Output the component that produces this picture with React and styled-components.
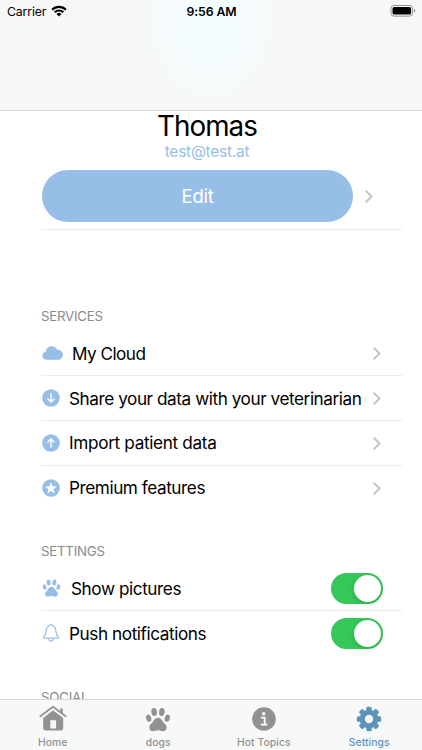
import React from "react";
import styled, { createGlobalStyle } from "styled-components";

const BLUE = "#97bee7";

export default function App() {
  return (
    <Screen>
      <GlobalStyle />
      <Header>
        <StatusBar>
          <Carrier>
            Carrier
            <WifiIcon />
          </Carrier>
          <Clock>9:56 AM</Clock>
          <Battery>
            <BatteryIcon />
          </Battery>
        </StatusBar>
      </Header>

      <Content>
        <Name>Thomas</Name>
        <Email>test@test.at</Email>
        <EditRow>
          <EditButton>Edit</EditButton>
          <Chevron />
        </EditRow>

        <Section $gap={77}>
          <SectionTitle>SERVICES</SectionTitle>
          <Row>
            <CloudIcon />
            <Label $left={8} $track={-0.55}>My Cloud</Label>
            <Chevron />
          </Row>
          <Row>
            <ArrowIcon />
            <Label $track={-0.45}>Share your data with your veterinarian</Label>
            <Chevron />
          </Row>
          <Row>
            <ArrowIcon up />
            <Label $lift={1} $track={-0.34}>Import patient data</Label>
            <Chevron />
          </Row>
          <Row $last>
            <StarIcon />
            <Label $lift={1} $track={-0.45}>Premium features</Label>
            <Chevron />
          </Row>
        </Section>

        <Section $gap={32}>
          <SectionTitle>SETTINGS</SectionTitle>
          <Row>
            <PawIcon size={21} color={BLUE} />
            <Label $left={9} $track={-0.43}>Show pictures</Label>
            <Toggle />
          </Row>
          <Row $last>
            <BellIcon />
            <Label $track={-0.43}>Push notifications</Label>
            <Toggle />
          </Row>
        </Section>

        <Section $gap={33}>
          <SectionTitle>SOCIAL</SectionTitle>
        </Section>
      </Content>

      <TabBar>
        <Tab>
          <HomeIcon />
          <span>Home</span>
        </Tab>
        <Tab>
          <PawIcon size={28} color="#929292" />
          <span>dogs</span>
        </Tab>
        <Tab>
          <InfoIcon />
          <span>Hot Topics</span>
        </Tab>
        <Tab $active>
          <GearIcon />
          <span>Settings</span>
        </Tab>
      </TabBar>
    </Screen>
  );
}

function WifiIcon() {
  return (
    <svg width="16" height="12" viewBox="0 0 16 12">
      <g fill="none" stroke="#000" strokeWidth="2.1">
        <path d="M1.1 4.7a9.8 9.8 0 0 1 13.8 0" />
        <path d="M3.7 7.3a6.1 6.1 0 0 1 8.6 0" />
      </g>
      <path d="M8 11.5 5.5 9a3.5 3.5 0 0 1 5 0z" />
    </svg>
  );
}

function BatteryIcon() {
  return (
    <svg width="26" height="12" viewBox="0 0 26 12">
      <rect x="1" y="0.5" width="21.6" height="10.6" rx="2.8" fill="#fff" stroke="#8d8d8d" />
      <rect x="2.5" y="2" width="18.6" height="7.6" rx="1.5" />
      <path d="M24 4v3.6c.8-.3 1.2-1 1.2-1.8s-.4-1.5-1.2-1.8z" fill="#8d8d8d" />
    </svg>
  );
}

function Chevron() {
  return (
    <ChevronSvg width="8" height="13" viewBox="0 0 8 13">
      <path d="m1.2 1.2 5.4 5.3-5.4 5.3" />
    </ChevronSvg>
  );
}

function CloudIcon() {
  return (
    <svg width="23" height="14" viewBox="0 0 23 14" fill={BLUE}>
      <path d="M5.7 13.8c-2.6 0-4.4-1.7-4.4-4 0-2 1.3-3.5 3.3-3.8C4.900 2.700 7.400.2 10.700.2c2.500 0 4.600 1.400 5.500 3.600 3.300-.1 5.800 2 5.800 5 0 2.900-2.200 5-5.200 5z" />
    </svg>
  );
}

function ArrowIcon({ up }) {
  return (
    <svg width="20" height="18" viewBox="0 0 20 18">
      <circle cx="10" cy="9" r="8.8" fill={BLUE} />
      <path
        d={up ? "M10 13.3V5M6.9 8 10 4.9 13.1 8" : "M10 4.7V13M6.9 10l3.1 3.1 3.1-3.1"}
        fill="none"
        stroke="#fff"
        strokeWidth="1.4"
        strokeLinecap="round"
        strokeLinejoin="round"
      />
    </svg>
  );
}

function StarIcon() {
  return (
    <svg width="20" height="18" viewBox="0 0 20 18">
      <circle cx="10" cy="9" r="8.8" fill={BLUE} />
      <path
        d="m10 3.1 1.5 4.2 4.5.1-3.5 2.8 1.2 4.3L10 12l-3.700 2.500 1.200-4.300L4 7.400l4.500-.1z"
        fill="#fff"
      />
    </svg>
  );
}

function PawIcon({ size, color }) {
  return (
    <svg width={size} height={size - 1} viewBox="0 0 28 28" fill={color}>
      <ellipse cx="10" cy="6.2" rx="2.9" ry="4.2" transform="rotate(-7 10 6.2)" />
      <ellipse cx="18" cy="6.2" rx="2.9" ry="4.2" transform="rotate(7 18 6.2)" />
      <ellipse cx="4.3" cy="12.6" rx="2.7" ry="3.8" transform="rotate(-16 4.3 12.6)" />
      <ellipse cx="23.7" cy="12.6" rx="2.7" ry="3.8" transform="rotate(16 23.7 12.6)" />
      <path d="M14 12.2c-2.7 0-4 2-5.1 4-1.2 2.2-3.9 3.2-3.9 6.1 0 2.3 1.6 3.8 3.8 3.8 1.9 0 3.1-.9 5.2-.9s3.3.9 5.2.9c2.2 0 3.8-1.5 3.8-3.8 0-2.9-2.7-3.9-3.9-6.1-1.1-2-2.4-4-5.1-4z" />
    </svg>
  );
}

function BellIcon() {
  return (
    <svg width="20" height="18" viewBox="-0.3 0 20 18" fill="none" stroke={BLUE} strokeWidth="1.2">
      <path d="M3.1 14.2c-.8 0-1.1-.8-.6-1.4 1.5-1.6 2.1-2.7 2.3-5.6.2-3.2 1.200-4.800 3.200-5.500C8.200.9 9 .6 9.700.6s1.500.3 1.700 1.100c2 .7 3 2.300 3.200 5.500.2 2.900.8 4 2.300 5.600.5.6.2 1.400-.6 1.400z" />
      <path d="M7.500 14.500c.1 1.600 1 2.700 2.200 2.700s2.100-1.100 2.200-2.700" />
    </svg>
  );
}

function HomeIcon() {
  return (
    <svg width="28" height="28" viewBox="0 0 28 28" fill="#929292">
      <path d="M1.3 11.2 14 1.800l12.700 9.400" fill="none" stroke="#929292" strokeWidth="1.7" strokeLinecap="round" strokeLinejoin="round" />
      <path d="M21.200 3.400h2.600v6.200l-2.600-2z" />
      <path
        fillRule="evenodd"
        d="M14 5.200 24.200 13V23.200a2.300 2.300 0 0 1-2.300 2.300H6.500a2.300 2.300 0 0 1-2.300-2.300V13zM11.300 15.200v8.200h5.800v-8.200z"
      />
    </svg>
  );
}

function InfoIcon() {
  return (
    <svg width="28" height="28" viewBox="0 0 28 28">
      <circle cx="14" cy="14" r="11.8" fill="#929292" />
      <circle cx="13.7" cy="8.7" r="1.7" fill="#fff" />
      <path d="M11.1 12.6h3.6v6.8M10.8 19.7h6.6" fill="none" stroke="#fff" strokeWidth="1.8" />
    </svg>
  );
}

function GearIcon() {
  return (
    <svg width="28" height="28" viewBox="0 0 28 28">
      <g fill="#5c93b9">
        {[0, 45, 90, 135].map((angle) => (
          <rect
            key={angle}
            x="11.3"
            y="1.8"
            width="5.4"
            height="24.4"
            rx="1.5"
            transform={`rotate(${angle} 14 14)`}
          />
        ))}
        <circle cx="14" cy="14" r="9.3" />
      </g>
      <circle cx="14" cy="14" r="4.2" fill="#f7f8f8" />
    </svg>
  );
}

const GlobalStyle = createGlobalStyle`
  body {
    margin: 0;
    background: #fff;
  }

  * {
    box-sizing: border-box;
  }
`;

const Screen = styled.div`
  display: flex;
  flex-direction: column;
  width: 422px;
  height: 750px;
  overflow: hidden;
  background: #fff;
  color: #000;
  font-family: Inter, "Liberation Sans", sans-serif;

  svg {
    flex-shrink: 0;
  }
`;

const Header = styled.header`
  flex: 0 0 111px;
  border-bottom: 1px solid #dcdddd;
  background: radial-gradient(ellipse 75px 95px at 211px 20px, #f5fcfd 45%, #f7f7f7);
`;

const StatusBar = styled.div`
  display: grid;
  grid-template-columns: 1fr auto 1fr;
  align-items: center;
  height: 22px;
  padding: 0 6px 0 7px;
`;

const Carrier = styled.div`
  display: flex;
  align-items: center;
  gap: 5px;
  font-size: 12.3px;
  letter-spacing: -0.15px;

  svg {
    margin-bottom: 1px;
  }
`;

const Clock = styled.div`
  font-size: 12.3px;
  font-weight: 600;
  letter-spacing: -0.1px;
`;

const Battery = styled.div`
  display: flex;
  justify-content: flex-end;
  padding-bottom: 1px;
`;

const Content = styled.main`
  flex: 1;
  min-height: 0;
  overflow: hidden;
  padding: 0 20px 0 41px;
`;

const Name = styled.h1`
  margin: 0 0 0 -29px;
  font-size: 27.8px;
  font-weight: 400;
  line-height: 30px;
  letter-spacing: -0.95px;
  text-align: center;
`;

const Email = styled.div`
  margin-left: -29px;
  font-size: 15.5px;
  line-height: 22px;
  letter-spacing: -0.25px;
  text-align: center;
  color: ${BLUE};
`;

const EditRow = styled.div`
  display: flex;
  align-items: center;
  gap: 12px;
  height: 67px;
  padding-left: 1px;
  border-bottom: 1px solid #ececee;
`;

const EditButton = styled.button`
  width: 311px;
  height: 52px;
  padding: 0;
  border: 0;
  border-radius: 26px;
  background: ${BLUE};
  color: #fff;
  font-family: inherit;
  font-size: 18.5px;
  letter-spacing: -0.3px;
`;

const ChevronSvg = styled.svg`
  fill: none;
  stroke: #c3c3c6;
  stroke-width: 1.9;
  stroke-linecap: round;
  stroke-linejoin: round;
`;

const Section = styled.section`
  margin-top: ${(props) => props.$gap}px;
`;

const SectionTitle = styled.h2`
  margin: 0 0 6px;
  font-size: 13.3px;
  font-weight: 400;
  line-height: 18px;
  letter-spacing: -0.25px;
  color: #8a8a8e;
`;

const Row = styled.div`
  display: flex;
  align-items: center;
  height: ${(props) => (props.$last ? 44 : 45)}px;
  padding-right: 21px;
  border-bottom: ${(props) => (props.$last ? "0" : "1px solid #ececee")};
`;

const Label = styled.span`
  flex: 1;
  margin-left: ${(props) => props.$left ?? 8}px;
  padding-bottom: ${(props) => props.$lift ?? 0}px;
  font-size: 17.2px;
  letter-spacing: ${(props) => props.$track}px;
  white-space: nowrap;
`;

const Toggle = styled.span`
  display: flex;
  justify-content: flex-end;
  width: 52px;
  height: 31px;
  margin: 1px -2px 0 0;
  padding: 2px;
  border-radius: 16px;
  background: #35c759;

  &::after {
    content: "";
    width: 27px;
    height: 27px;
    border-radius: 50%;
    background: #fff;
    box-shadow: 0 2px 5px rgba(0, 0, 0, 0.15);
  }
`;

const TabBar = styled.nav`
  display: grid;
  grid-template-columns: repeat(4, 1fr);
  flex: 0 0 51px;
  border-top: 1px solid #d5d6d6;
  background: #f7f8f8;
`;

const Tab = styled.div`
  display: flex;
  flex-direction: column;
  align-items: center;
  justify-content: flex-end;
  padding-bottom: 1px;
  font-size: 10.3px;
  font-weight: 500;
  line-height: 14px;
  letter-spacing: 0.1px;
  color: ${(props) => (props.$active ? "#5c93b9" : "#929292")};

  span {
    margin-top: 2px;
  }
`;
